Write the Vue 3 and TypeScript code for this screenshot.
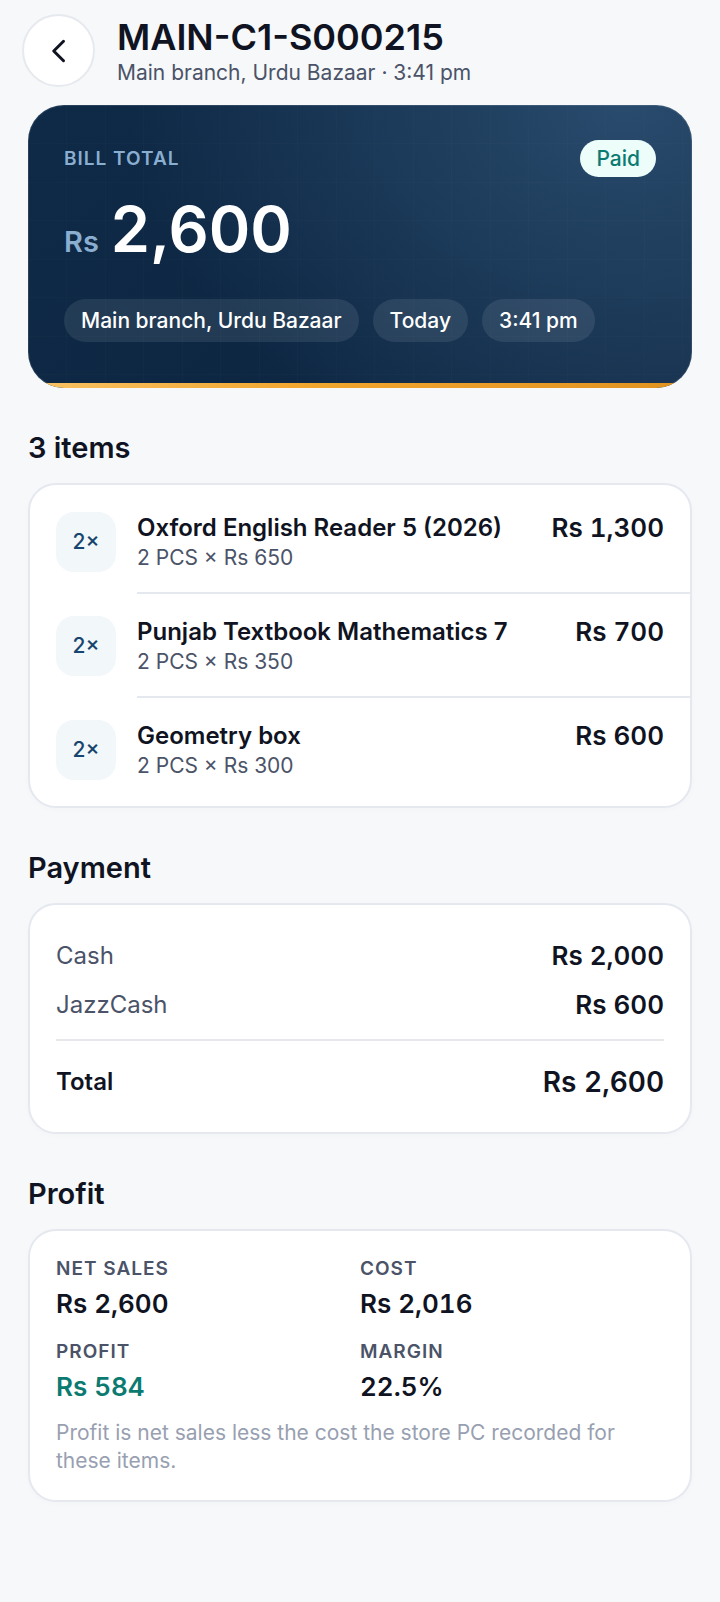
<script setup lang="ts">
interface LineItem {
  name: string
  quantity: number
  unitPrice: number
}

interface Payment {
  method: string
  amount: number
}

const billNumber = 'MAIN-C1-S000215'
const branch = 'Main branch, Urdu Bazaar'
const time = '3:41 pm'

const items: LineItem[] = [
  { name: 'Oxford English Reader 5 (2026)', quantity: 2, unitPrice: 650 },
  { name: 'Punjab Textbook Mathematics 7', quantity: 2, unitPrice: 350 },
  { name: 'Geometry box', quantity: 2, unitPrice: 300 },
]

const payments: Payment[] = [
  { method: 'Cash', amount: 2000 },
  { method: 'JazzCash', amount: 600 },
]

const total = payments.reduce((sum, p) => sum + p.amount, 0)
const cost = 2016
const profit = total - cost
const margin = ((profit / total) * 100).toFixed(1) + '%'

const number = (value: number): string => value.toLocaleString('en-US')
const rupees = (value: number): string => 'Rs ' + number(value)

const goBack = (): void => window.history.back()
</script>

<template>
  <div class="page">
    <header class="topbar">
      <button class="back" type="button" aria-label="Back" @click="goBack">
        <svg width="36" height="36" viewBox="0 0 24 24" fill="none" aria-hidden="true">
          <path d="M15 5.5 L8.5 12 L15 18.5" stroke="currentColor" stroke-width="2" stroke-linecap="round" stroke-linejoin="round" />
        </svg>
      </button>
      <div>
        <h1>{{ billNumber }}</h1>
        <p class="subtitle">{{ branch }} · {{ time }}</p>
      </div>
    </header>

    <main>
      <section class="hero" aria-label="Bill total">
        <div class="hero-top">
          <span class="hero-label">Bill total</span>
          <span class="status">Paid</span>
        </div>
        <p class="hero-amount"><span class="currency">Rs</span>{{ number(total) }}</p>
        <ul class="chips">
          <li>{{ branch }}</li>
          <li>Today</li>
          <li>{{ time }}</li>
        </ul>
      </section>

      <section>
        <h2>{{ items.length }} items</h2>
        <ul class="card items">
          <li v-for="item in items" :key="item.name" class="item">
            <span class="quantity">{{ item.quantity }}×</span>
            <div class="item-body">
              <div>
                <h3>{{ item.name }}</h3>
                <p class="detail">{{ item.quantity }} PCS × {{ rupees(item.unitPrice) }}</p>
              </div>
              <span class="amount">{{ rupees(item.quantity * item.unitPrice) }}</span>
            </div>
          </li>
        </ul>
      </section>

      <section>
        <h2>Payment</h2>
        <dl class="card payment">
          <div v-for="payment in payments" :key="payment.method" class="pay-row">
            <dt>{{ payment.method }}</dt>
            <dd class="amount">{{ rupees(payment.amount) }}</dd>
          </div>
          <div class="pay-row total">
            <dt>Total</dt>
            <dd class="amount">{{ rupees(total) }}</dd>
          </div>
        </dl>
      </section>

      <section>
        <h2>Profit</h2>
        <div class="card profit">
          <dl class="stats">
            <div>
              <dt>Net sales</dt>
              <dd class="amount">{{ rupees(total) }}</dd>
            </div>
            <div>
              <dt>Cost</dt>
              <dd class="amount">{{ rupees(cost) }}</dd>
            </div>
            <div>
              <dt>Profit</dt>
              <dd class="amount gain">{{ rupees(profit) }}</dd>
            </div>
            <div>
              <dt>Margin</dt>
              <dd class="amount">{{ margin }}</dd>
            </div>
          </dl>
          <p class="note">Profit is net sales less the cost the store PC recorded for these items.</p>
        </div>
      </section>
    </main>
  </div>
</template>

<style>
body {
  background: #f6f8fa;
}
</style>

<style scoped>
.page {
  box-sizing: border-box;
  min-height: 100vh;
  padding: 14px 28px 100px;
  color: #0f1322;
  font-family: Inter, "Liberation Sans", sans-serif;
  font-size: 21px;
  line-height: 28px;
}

h1,
h2,
h3,
p,
ul,
dl,
dd {
  margin: 0;
  padding: 0;
}

ul {
  list-style: none;
}

.topbar {
  display: flex;
  align-items: center;
  gap: 22px;
  margin-left: -6px;
}

.back {
  box-sizing: border-box;
  display: grid;
  flex: none;
  place-items: center;
  width: 73px;
  height: 73px;
  padding: 0;
  border: 2px solid #e6e9ee;
  border-radius: 50%;
  background: #fff;
  color: #0f1322;
}

h1 {
  font-size: 36px;
  font-weight: 600;
  line-height: 44px;
}

.subtitle {
  color: #4b5368;
}

.hero {
  position: relative;
  overflow: hidden;
  margin-top: 18px;
  padding: 35px 36px 46px;
  border-radius: 36px;
  background:
    linear-gradient(90deg, rgba(255, 255, 255, 0.01) 1px, transparent 1px 38px, rgba(255, 255, 255, 0.01) 38px 39px, transparent 39px) 0 0 / 77px 77px,
    linear-gradient(rgba(255, 255, 255, 0.01) 1px, transparent 1px 38px, rgba(255, 255, 255, 0.01) 38px 39px, transparent 39px) 0 0 / 77px 77px,
    radial-gradient(ellipse 75% 130% at 90% 0%, #294b6d 0%, rgba(41, 75, 109, 0) 100%),
    linear-gradient(135deg, #0f2a47 0%, #0d2743 50%, #152f4b 100%);
  box-shadow: inset 0 0 0 1px rgba(255, 255, 255, 0.1);
  color: #fff;
}

.hero::after {
  content: "";
  position: absolute;
  inset: auto 0 0;
  height: 5px;
  background: linear-gradient(90deg, #f8c365 0%, #f2a730 40%, #e0921f 100%);
}

.hero-top {
  display: flex;
  align-items: center;
  justify-content: space-between;
}

.hero-label {
  color: #8aaed0;
  font-size: 19px;
  font-weight: 600;
  letter-spacing: 1px;
  text-transform: uppercase;
}

.status {
  padding: 5px 16px 4px;
  border-radius: 20px;
  background: #ecfdfa;
  color: #0b7a70;
  font-weight: 500;
}

.hero-amount {
  display: flex;
  align-items: baseline;
  gap: 12px;
  margin-top: 12px;
  font-size: 63px;
  font-weight: 600;
  line-height: 80px;
}

.currency {
  color: #8aaed0;
  font-size: 29px;
  font-weight: 600;
}

.chips {
  display: flex;
  flex-wrap: wrap;
  gap: 14px;
  margin-top: 17px;
}

.chips li {
  padding: 8px 17px 7px;
  border-radius: 22px;
  background: rgba(255, 255, 255, 0.09);
  font-weight: 500;
}

h2 {
  margin: 41px 0 16px;
  font-size: 29px;
  font-weight: 600;
  line-height: 38px;
}

.card {
  border: 2px solid #e6e8f0;
  border-radius: 28px;
  background: #fff;
  box-shadow: 0 2px 6px rgba(15, 19, 34, 0.02);
}

.items {
  padding: 5px 0 4px;
}

.item {
  display: flex;
  align-items: center;
  gap: 21px;
  padding-left: 26px;
}

.quantity {
  display: grid;
  flex: none;
  place-items: center;
  width: 60px;
  height: 60px;
  border-radius: 18px;
  background: #f2f7fa;
  color: #17456f;
  font-weight: 500;
}

.item-body {
  display: flex;
  flex: 1;
  justify-content: space-between;
  gap: 16px;
  padding: 22px 26px 20px 0;
  border-bottom: 2px solid #e6e8f0;
}

.item:last-child .item-body {
  border-bottom-color: transparent;
}

h3 {
  font-size: 24px;
  font-weight: 600;
  line-height: 32px;
}

.detail {
  color: #4b5368;
}

.amount {
  font-size: 26px;
  font-weight: 600;
  line-height: 32px;
  font-variant-numeric: tabular-nums;
  white-space: nowrap;
}

.payment {
  padding: 26px;
}

.pay-row {
  display: flex;
  align-items: center;
  justify-content: space-between;
  padding: 8px 0;
  font-size: 24px;
  line-height: 33px;
}

.pay-row dt {
  color: #4b5368;
}

.total {
  margin-top: 10px;
  padding-top: 24px;
  border-top: 2px solid #e6e8ec;
}

.pay-row.total dt {
  color: #0f1322;
  font-weight: 600;
}

.total .amount {
  font-size: 28px;
}

.profit {
  padding: 24px 26px 25px;
}

.stats {
  display: grid;
  grid-template-columns: 1fr 1fr;
  row-gap: 18px;
}

.stats dt {
  color: #4b5368;
  font-size: 19px;
  font-weight: 600;
  letter-spacing: 1px;
  text-transform: uppercase;
}

.stats dd {
  margin-top: 5px;
}

.stats .gain {
  color: #0b7a70;
}

.note {
  margin-top: 16px;
  color: #989fb1;
}
</style>
